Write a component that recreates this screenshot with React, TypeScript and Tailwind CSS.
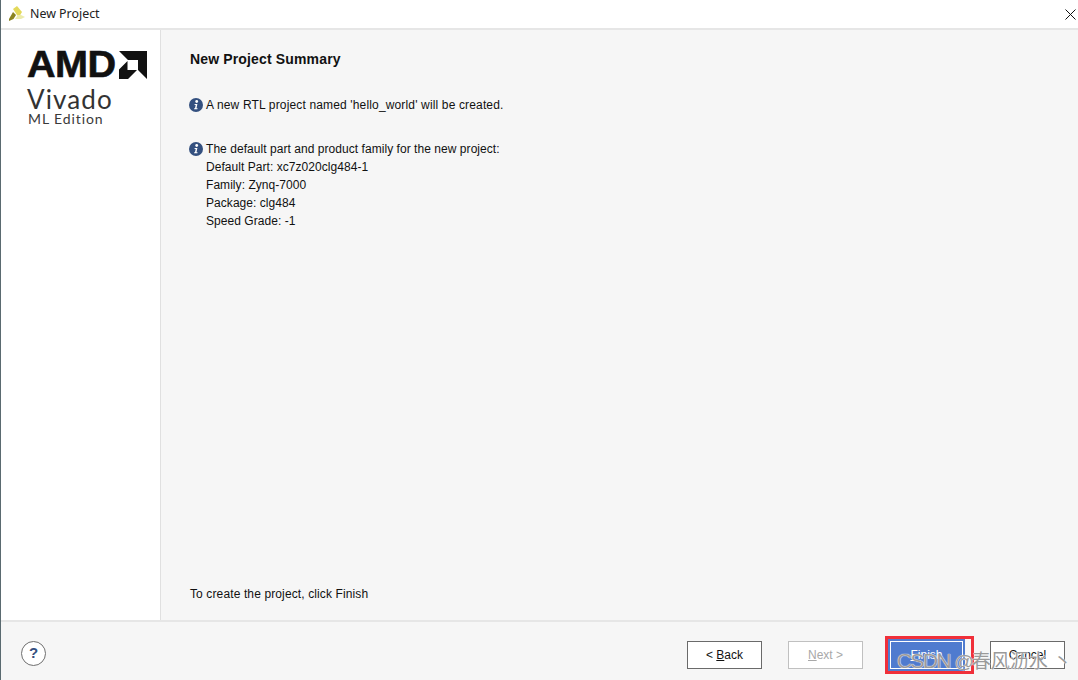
import React from 'react';

const InfoIcon = () => (
  <svg width="14" height="14" viewBox="0 0 14 14" className="shrink-0">
    <circle cx="7" cy="7" r="7" fill="#34507f" />
    <circle cx="7.7" cy="3.5" r="1.4" fill="#ffffff" />
    <path d="M5.2 6h3.2l-.9 4.2h1.1l-.2 1H5l.2-1h.8l.7-3.2h-.7z" fill="#ffffff" />
  </svg>
);

const AppIcon = () => (
  <svg width="17" height="16" viewBox="0 0 17 16" className="shrink-0">
    <path d="M0 13 L4 6 L7 9 L4.5 13 L0 15 Z" fill="#8a8420" />
    <path d="M4 3 L8 0 L13 6 L10 11 L8 9 Z" fill="#e3d95a" />
    <path d="M6 13 L9 9 L12 9 L16 11 L12 13 Z" fill="#ecebab" />
  </svg>
);

const CloseIcon = () => (
  <svg width="11" height="11" viewBox="0 0 11 11" className="shrink-0">
    <path d="M0.5 0.5L10.5 10.5M10.5 0.5L0.5 10.5" stroke="#111111" strokeWidth="1" fill="none" />
  </svg>
);

const AmdMark = () => (
  <svg width="28" height="28" viewBox="0 0 28 28" className="shrink-0">
    <path d="M0 0H28V28L19 19V9H9Z" fill="#111111" />
    <path d="M8.5 10V19H18L9 28H0V18.5Z" fill="#111111" />
  </svg>
);

const Logo = () => (
  <div className="flex flex-col font-['Lato',sans-serif]">
    <div className="flex items-center h-[28px]">
      <span className="font-['Liberation_Sans',sans-serif] font-bold text-[37px] leading-[32px] tracking-[-0.5px] w-[92px] scale-x-[1.07] origin-left [-webkit-text-stroke:0.6px_#111111] text-[#111111]">AMD</span>
      <AmdMark />
    </div>
    <span className="mt-[7px] text-[26px] leading-[27px] tracking-[1.1px] text-[#333333]">Vivado</span>
    <span className="-mt-[1px] text-[14px] leading-[14px] tracking-[0.9px] text-[#3a3a3a] ml-[1px]">ML Edition</span>
  </div>
);

const WizardButton = ({ children, disabled }: { children: React.ReactNode; disabled?: boolean }) => (
  <button
    className={`w-[75px] h-[28px] border bg-white text-[12px] ${disabled ? 'border-[#c0c0c0] text-[#a8a8a8]' : 'border-[#6a6a6a] text-[#111111]'}`}
  >
    {children}
  </button>
);

export default function App() {
  return (
    <div className="relative w-[1078px] h-[680px] overflow-hidden flex flex-col bg-white border-l border-l-[#5a6a70] font-['Liberation_Sans',sans-serif] text-[12px] text-[#111111]">
      <div className="h-[28px] flex items-center justify-between pl-[8px] pr-[2px] bg-white shrink-0">
        <div className="flex items-center gap-[4px]">
          <AppIcon />
          <span className="font-['Noto_Sans',sans-serif] text-[12.4px] text-[#222222]">New Project</span>
        </div>
        <CloseIcon />
      </div>
      <div className="h-[2px] bg-[#e6e6e6] shrink-0" />

      <div className="flex h-[590px] shrink-0">
        <div className="w-[160px] shrink-0 bg-white border-r border-r-[#e0e0e0] pl-[26px] pt-[21px]">
          <Logo />
        </div>
        <div className="flex-1 bg-[#f6f6f6] pl-[29px] flex flex-col">
          <h1 className="mt-[21px] font-bold text-[14px] leading-[16px] tracking-[0.15px]">New Project Summary</h1>
          <div className="mt-[29px] flex items-center gap-[3px] h-[18px] -ml-[1px]">
            <InfoIcon />
            <span className="tracking-[0.15px]">A new RTL project named 'hello_world' will be created.</span>
          </div>
          <div className="mt-[26px] flex items-start gap-[3px] -ml-[1px]">
            <div className="h-[18px] flex items-center">
              <InfoIcon />
            </div>
            <div className="flex flex-col leading-[18px] tracking-[0.05px]">
              <span>The default part and product family for the new project:</span>
              <span>Default Part: xc7z020clg484-1</span>
              <span>Family: Zynq-7000</span>
              <span>Package: clg484</span>
              <span>Speed Grade: -1</span>
            </div>
          </div>
          <div className="mt-auto mb-[17px] leading-[18px] tracking-[0.12px]">To create the project, click Finish</div>
        </div>
      </div>

      <div className="flex-1 bg-[#f6f6f6] border-t-2 border-t-[#e6e6e6] flex items-center justify-between pl-[20px] pr-[13px] pt-[8px]">
        <div className="w-[25px] h-[25px] -mt-[4px] rounded-full border border-[#6f6f6f] bg-white flex items-center justify-center font-bold text-[15px] text-[#34507f]">?</div>
        <div className="flex items-center">
          <WizardButton>&lt; <span className="underline">B</span>ack</WizardButton>
          <div className="ml-[26px]">
            <WizardButton disabled><span className="underline">N</span>ext &gt;</WizardButton>
          </div>
          <button className="ml-[25px] w-[77px] h-[32px] bg-[#4f7bcf] p-[2px] text-[12px] text-white">
            <span className="flex items-center justify-center w-full h-full border border-white"><span className="underline">F</span>inish</span>
          </button>
          <div className="ml-[25px]">
            <WizardButton>Cancel</WizardButton>
          </div>
        </div>
      </div>

      {/* red highlight and watermark sit over the footer */}
      <div className="absolute left-[884px] top-[636px] w-[89px] h-[38px] border-[3px] border-[#f0303a] pointer-events-none" />
      <div className="absolute left-[896px] top-[649px] text-[19px] leading-[24px] whitespace-nowrap text-[#9a9a9a] [text-shadow:0_0_1px_#ffffff,0_0_1px_#ffffff] font-['Liberation_Sans','Noto_Sans_CJK_SC',sans-serif] pointer-events-none">
        <span className="text-[21px] tracking-[-1.6px]">CSDN</span> <span className="-ml-[1px]">@</span><span className="-ml-[2px]">春风沥水</span> 丶
      </div>
    </div>
  );
}
